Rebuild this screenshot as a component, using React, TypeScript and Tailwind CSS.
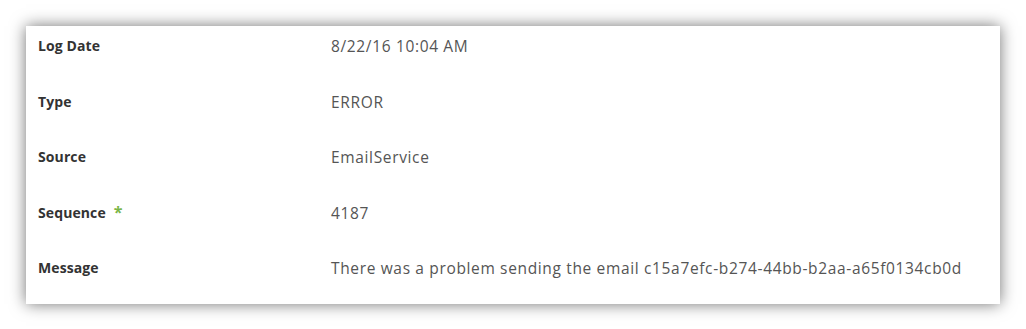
import React from "react";

const rows: { label: string; value: string; star?: boolean }[] = [
  { label: "Log Date", value: "8/22/16 10:04 AM" },
  { label: "Type", value: "ERROR" },
  { label: "Source", value: "EmailService" },
  { label: "Sequence", value: "4187", star: true },
  { label: "Message", value: "There was a problem sending the email c15a7efc-b274-44bb-b2aa-a65f0134cb0d" },
];

export default function App() {
  return (
    <div className="w-[1026px] h-[329px] bg-white pt-[26px] pl-[26px]" style={{ fontFamily: "'Open Sans', sans-serif" }}>
      <div className="w-[974px] bg-white shadow-[0_0_15px_rgba(0,0,0,0.55)]">
        {rows.map((r) => (
          <div key={r.label} className="flex h-[55.5px] pt-[10px]">
            <div className="w-[305px] pl-[12px] text-[14px] leading-[20px] font-bold tracking-[0.1px] text-[#333] flex items-start">
              <span>{r.label}</span>
              {r.star && <span className="ml-[8px] text-[#7ab648] text-[16px] leading-[18px]">*</span>}
            </div>
            <div className="text-[15.5px] leading-[20px] tracking-[0.65px] text-[#555]">{r.value}</div>
          </div>
        ))}
      </div>
    </div>
  );
}
